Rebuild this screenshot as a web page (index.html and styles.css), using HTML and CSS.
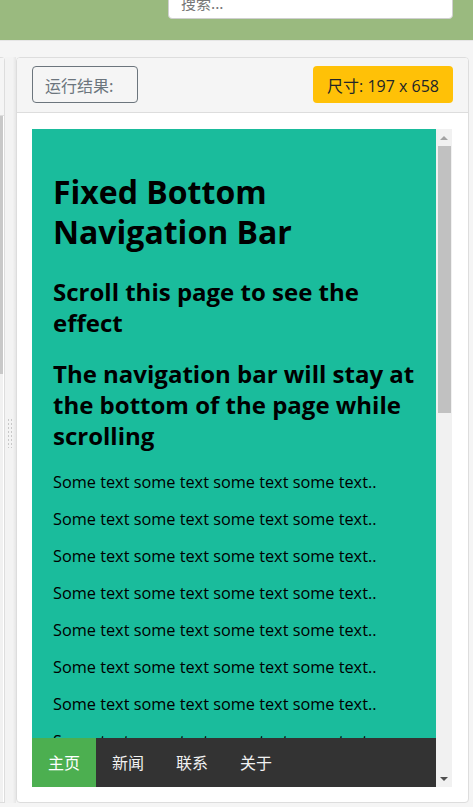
FILE: index.html
```html
<!DOCTYPE html>
<html lang="zh">
<head>
<meta charset="utf-8">
<title>运行结果</title>
<link rel="stylesheet" href="styles.css">
</head>
<body>
<header class="topbar">
  <input class="search" type="text" placeholder="搜索...">
</header>
<div class="workspace">
  <div class="side-panel">
    <div class="side-head"></div>
    <div class="side-body"><div class="side-thumb"></div></div>
  </div>
  <div class="gutter"><div class="grip"></div></div>
  <section class="panel">
    <div class="panel-head">
      <button class="result-btn" type="button">运行结果:</button>
      <span class="size-badge">尺寸: 197 x 658</span>
    </div>
    <div class="panel-body">
      <div class="frame">
        <div class="viewport">
          <div class="main">
            <h1>Fixed Bottom Navigation Bar</h1>
            <h2>Scroll this page to see the effect</h2>
            <h2 class="last">The navigation bar will stay at the bottom of the page while scrolling</h2>
            <p>Some text some text some text some text..</p>
            <p>Some text some text some text some text..</p>
            <p>Some text some text some text some text..</p>
            <p>Some text some text some text some text..</p>
            <p>Some text some text some text some text..</p>
            <p>Some text some text some text some text..</p>
            <p>Some text some text some text some text..</p>
            <p>Some text some text some text some text..</p>
          </div>
          <nav class="navbar">
            <a class="active" href="#home">主页</a>
            <a href="#news">新闻</a>
            <a href="#contact">联系</a>
            <a href="#about">关于</a>
          </nav>
        </div>
        <div class="scrollbar">
          <div class="arrow up"></div>
          <div class="track"><div class="thumb"></div></div>
          <div class="arrow down"></div>
        </div>
      </div>
    </div>
  </section>
</div>
</body>
</html>
```
FILE: styles.css
```css
* { box-sizing: border-box; }
html, body { margin: 0; padding: 0; }
body {
  background: #f5f5f5;
  font-family: "Open Sans", "Noto Sans CJK SC", sans-serif;
  width: 473px;
  height: 807px;
  overflow: hidden;
}
.topbar {
  height: 41px;
  background: #9aba7f;
  border-bottom: 1px solid #e6e6e6;
  position: relative;
}
.search {
  position: absolute;
  left: 168px;
  top: -15px;
  width: 285px;
  height: 34px;
  border: 1px solid #cfcfcf;
  border-radius: 4px;
  background: #fff;
  padding: 0 12px;
  font-family: "Noto Sans CJK SC", sans-serif;
  font-size: 15px;
  color: #555;
}
.search::placeholder { color: #777; }
.workspace {
  display: flex;
  padding-top: 16px;
  height: 762px;
}
.side-panel {
  width: 5px;
  border: 1px solid #ddd;
  border-left: none;
  border-radius: 0 4px 0 0;
  background: #fff;
  display: flex;
  flex-direction: column;
}
.side-head {
  height: 58px;
  background: #f5f5f5;
  border-bottom: 1px solid #ddd;
}
.side-body {
  flex: 1;
  background: #f1f1f1;
  width: 3px;
}
.side-thumb {
  height: 258px;
  background: #c8c8c8;
}
.gutter {
  width: 11px;
  background: linear-gradient(to right, #f3f3f3 70%, #e6e6e6);
  display: flex;
  align-items: flex-start;
  padding-top: 361px;
  padding-left: 2px;
}
.grip {
  width: 5px;
  height: 30px;
  background-image: radial-gradient(circle, #c8c8c8 0.9px, transparent 1.1px);
  background-size: 3px 4px;
}
.panel {
  width: 453px;
  height: 746px;
  border: 1px solid #ddd;
  border-radius: 4px;
  background: #fff;
  display: flex;
  flex-direction: column;
  overflow: hidden;
}
.panel-head {
  height: 55px;
  background: #f5f5f5;
  border-bottom: 1px solid #ddd;
  display: flex;
  align-items: flex-start;
  justify-content: space-between;
  padding: 8px 15px 0 15px;
}
.result-btn {
  width: 106px;
  height: 37px;
  border: 1px solid #6c757d;
  border-radius: 4px;
  background: transparent;
  color: #6c757d;
  font-family: "Noto Sans CJK SC", sans-serif;
  font-size: 16px;
  padding: 0 0 0 12px;
  text-align: left;
}
.size-badge {
  width: 140px;
  height: 37px;
  background: #ffc107;
  border-radius: 4px;
  color: #212529;
  font-family: "Open Sans", "Noto Sans CJK SC", sans-serif;
  font-size: 16px;
  display: flex;
  align-items: center;
  justify-content: center;
}
.panel-body {
  padding: 16px 15px 0 15px;
}
.frame {
  width: 420px;
  height: 658px;
  display: flex;
}
.viewport {
  width: 404px;
  height: 658px;
  background: #1abc9c;
  position: relative;
  overflow: hidden;
}
.main {
  padding: 43px 21px 0 21px;
  color: #000;
  font-family: "Open Sans", sans-serif;
}
.main h1 {
  font-size: 32px;
  line-height: 40px;
  margin: 0 0 24px;
  font-weight: 700;
}
.main h2 {
  font-size: 24px;
  line-height: 31px;
  margin: 0 0 20px;
  font-weight: 700;
}
.main h2.last { margin-bottom: 21px; }
.main p {
  font-size: 16.3px;
  line-height: 21px;
  margin: 0 0 16px;
}
.navbar {
  position: absolute;
  left: 0;
  right: 0;
  bottom: 0;
  height: 49px;
  background: #333;
  display: flex;
}
.navbar a {
  display: block;
  padding: 14px 16px;
  color: #f2f2f2;
  text-decoration: none;
  font-family: "Noto Sans CJK SC", sans-serif;
  font-size: 16px;
  line-height: 21px;
}
.navbar a.active {
  background: #4caf50;
  color: #fff;
}
.scrollbar {
  width: 16px;
  height: 658px;
  background: #f1f1f1;
  display: flex;
  flex-direction: column;
}
.arrow {
  height: 17px;
  display: flex;
  align-items: center;
  justify-content: center;
}
.arrow::before {
  content: "";
  width: 0;
  height: 0;
  border-left: 4px solid transparent;
  border-right: 4px solid transparent;
}
.arrow.up::before { border-bottom: 4px solid #a3a3a3; }
.arrow.down::before { border-top: 4px solid #505050; }
.track {
  flex: 1;
  padding: 0 1px 0 2px;
}
.thumb {
  height: 267px;
  background: #c1c1c1;
}
```
